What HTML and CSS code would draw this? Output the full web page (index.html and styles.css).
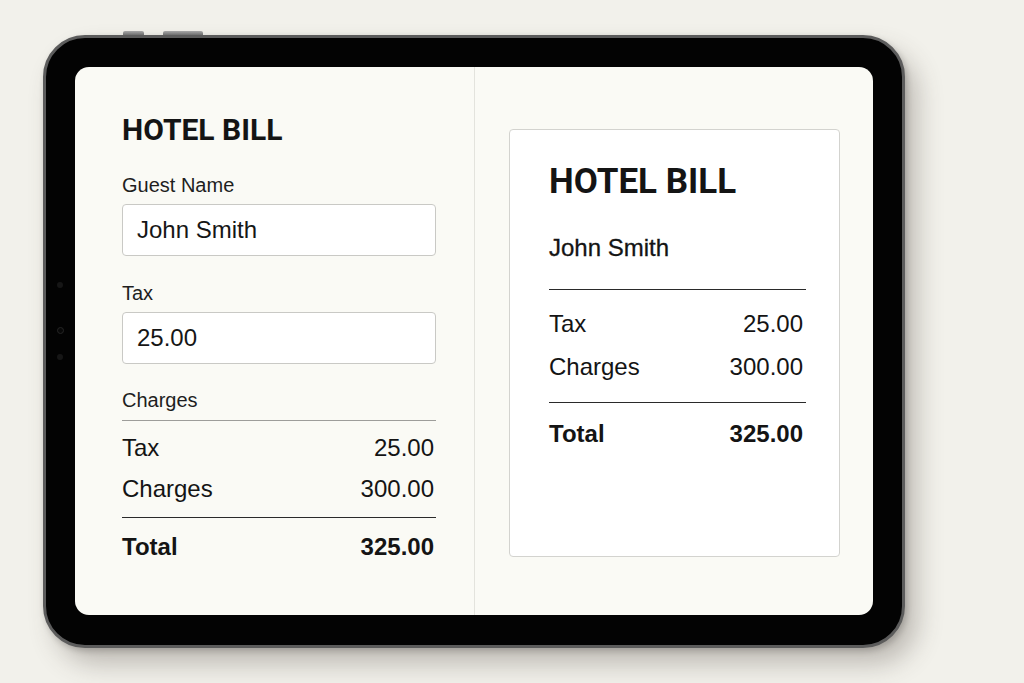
FILE: index.html
```html
<!DOCTYPE html>
<html lang="en">
<head>
<meta charset="utf-8">
<title>Hotel Bill</title>
<link rel="stylesheet" href="styles.css">
</head>
<body>
  <div class="tablet">
    <span class="btn btn-a"></span>
    <span class="btn btn-b"></span>
    <span class="sensor sensor-1"></span>
    <span class="sensor sensor-2"></span>
    <span class="sensor sensor-3"></span>
    <div class="screen">
      <section class="editor">
        <h1 class="title">HOTEL BILL</h1>
        <label class="label">Guest Name</label>
        <div class="input">John Smith</div>
        <label class="label">Tax</label>
        <div class="input">25.00</div>
        <div class="label label-charges">Charges</div>
        <div class="rule rule-light"></div>
        <div class="row"><span>Tax</span><span>25.00</span></div>
        <div class="row"><span>Charges</span><span>300.00</span></div>
        <div class="rule rule-dark"></div>
        <div class="row row-total"><span>Total</span><span>325.00</span></div>
      </section>
      <section class="preview">
        <div class="card">
          <h2 class="card-title">HOTEL BILL</h2>
          <div class="card-name">John Smith</div>
          <div class="rule rule-dark card-rule-top"></div>
          <div class="card-row"><span>Tax</span><span>25.00</span></div>
          <div class="card-row"><span>Charges</span><span>300.00</span></div>
          <div class="rule rule-dark card-rule-mid"></div>
          <div class="card-row card-total"><span>Total</span><span>325.00</span></div>
        </div>
      </section>
    </div>
  </div>
</body>
</html>
```

FILE: styles.css
```css
html, body {
  margin: 0;
  padding: 0;
}

body {
  width: 1024px;
  height: 683px;
  overflow: hidden;
  background: #f2f1eb;
  font-family: "Liberation Sans", Arial, sans-serif;
  color: #141414;
  padding: 35px 0 0 43px;
  box-sizing: border-box;
}

/* device body */
.tablet {
  position: relative;
  width: 862px;
  height: 613px;
  box-sizing: border-box;
  padding: 29px 29px 30px 29px;
  background: #030303;
  border: 3px solid #5c5c5c;
  border-radius: 42px;
  box-shadow: 12px 16px 26px rgba(70, 58, 52, 0.30), 2px 3px 6px rgba(0, 0, 0, 0.2);
}

.btn {
  position: absolute;
  top: -7px;
  height: 4px;
  background: linear-gradient(#a8a8a8, #6e6e6e);
  border-radius: 2px 2px 0 0;
}
.btn-a { left: 77px; width: 21px; }
.btn-b { left: 117px; width: 40px; }

.sensor {
  position: absolute;
  left: 11px;
  width: 6px;
  height: 6px;
  border-radius: 50%;
  background: #161616;
}
.sensor-1 { top: 244px; }
.sensor-2 { top: 289px; background: #080808; border: 1px solid #262626; width: 5px; height: 5px; }
.sensor-3 { top: 316px; }

/* display */
.screen {
  display: grid;
  grid-template-columns: 400px 1fr;
  height: 100%;
  background: #fafaf5;
  border-radius: 14px;
  overflow: hidden;
}

.editor {
  padding: 45px 38px 0 47px;
  border-right: 1px solid #e3e3dd;
  display: flex;
  flex-direction: column;
}

.title {
  margin: 0;
  font-family: Roboto, "Liberation Sans", sans-serif;
  font-size: 30px;
  line-height: 36px;
  font-weight: 700;
}

.label {
  display: block;
  font-size: 20px;
  line-height: 24px;
  color: #1e1e1e;
  margin-top: 25px;
}

.input {
  margin-top: 7px;
  height: 52px;
  box-sizing: border-box;
  padding: 0 14px;
  display: flex;
  align-items: center;
  background: #ffffff;
  border: 1px solid #c9c9c5;
  border-radius: 4px;
  font-size: 24px;
  color: #161616;
}

.label-charges { margin-top: 24px; }

.rule { height: 1px; }
.rule-light { background: #9d9d9a; margin-top: 8px; }
.rule-dark { background: #2a2a2a; }

.row {
  display: flex;
  justify-content: space-between;
  font-size: 24px;
  line-height: 41px;
  padding-right: 2px;
}
.editor .rule-light + .row { margin-top: 6px; }
.editor .rule-dark { margin-top: 8px; }
.row-total {
  font-weight: 700;
  margin-top: 8px;
}

/* printed preview */
.preview {
  padding: 62px 33px 0 34px;
}

.card {
  height: 428px;
  box-sizing: border-box;
  background: #ffffff;
  border: 1px solid #d3d3cf;
  border-radius: 4px;
  padding: 31px 33px 0 39px;
}

.card-title {
  margin: 0;
  font-family: Roboto, "Liberation Sans", sans-serif;
  font-size: 35px;
  line-height: 42px;
  font-weight: 700;
}

.card-name {
  margin-top: 30px;
  font-size: 24px;
  line-height: 30px;
  -webkit-text-stroke: 0.3px #141414;
}

.card-rule-top { margin-top: 26px; }

.card-row {
  display: flex;
  justify-content: space-between;
  font-size: 24px;
  line-height: 43px;
  padding-right: 3px;
}
.card-rule-top + .card-row { margin-top: 12px; }
.card-rule-mid { margin-top: 14px; }
.card-total {
  font-weight: 700;
  margin-top: 9px;
}
```
